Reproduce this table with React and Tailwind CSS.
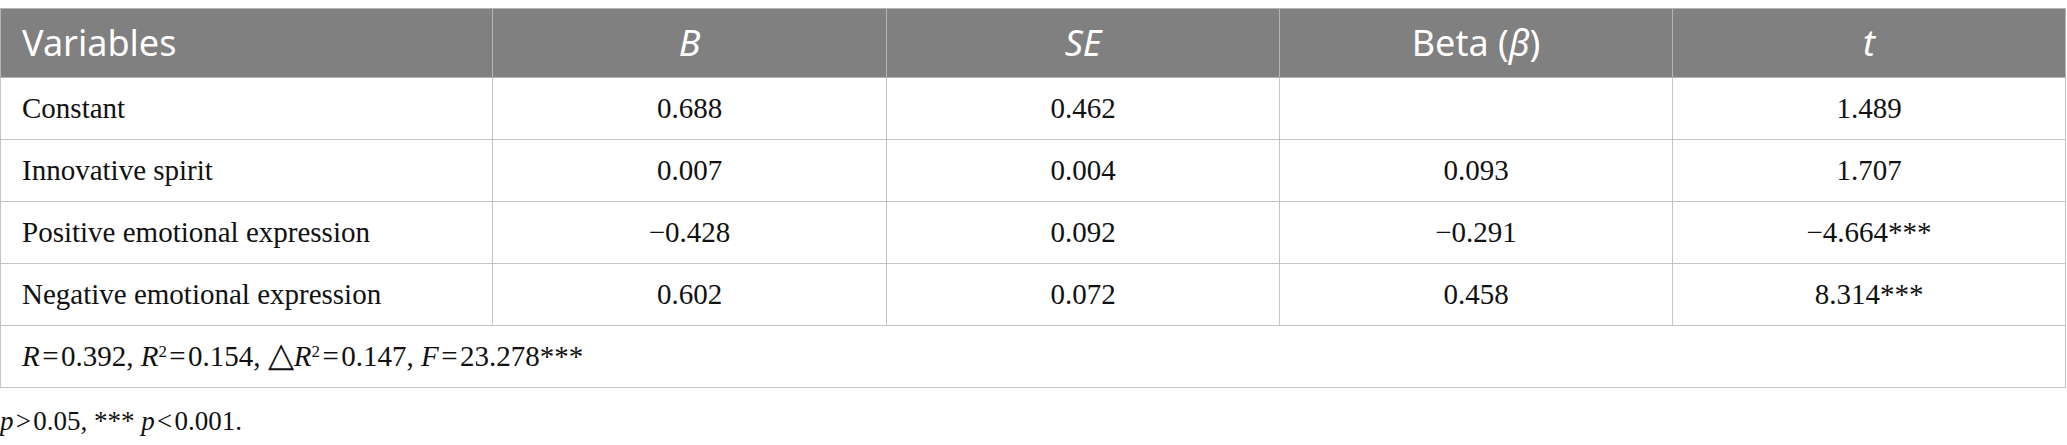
import React from "react";

const rows = [
  { name: "Constant", b: "0.688", se: "0.462", beta: "", t: "1.489" },
  { name: "Innovative spirit", b: "0.007", se: "0.004", beta: "0.093", t: "1.707" },
  { name: "Positive emotional expression", b: "\u22120.428", se: "0.092", beta: "\u22120.291", t: "\u22124.664***" },
  { name: "Negative emotional expression", b: "0.602", se: "0.072", beta: "0.458", t: "8.314***" },
];

const serif = "font-['Liberation_Serif','Times_New_Roman',serif]";
const sans = "font-['Noto_Sans','Open_Sans',sans-serif]";

export default function App() {
  return (
    <div className="w-[2067px] h-[445px] bg-white pt-2 text-[#111]">
      <table className="w-[2066px] table-fixed border-collapse">
        <colgroup>
          <col className="w-[492px]" />
          <col className="w-[394px]" />
          <col className="w-[393px]" />
          <col className="w-[393px]" />
          <col />
        </colgroup>
        <thead>
          <tr className={`h-[69px] bg-[#7f807f] text-white text-[36px] ${sans}`}>
            <th className="border border-[#b4b4b4] pl-[21px] text-left font-normal">Variables</th>
            <th className="border border-[#b4b4b4] text-center font-normal italic">B</th>
            <th className="border border-[#b4b4b4] text-center font-normal italic">SE</th>
            <th className="border border-[#b4b4b4] text-center font-normal">
              Beta (<span className="italic">β</span>)
            </th>
            <th className="border border-[#b4b4b4] text-center font-normal italic">t</th>
          </tr>
        </thead>
        <tbody className={`${serif} text-[29px]`}>
          {rows.map((r) => (
            <tr key={r.name} className="h-[62px]">
              <td className="border border-[#c3c3c3] pl-[21px]">{r.name}</td>
              <td className="border border-[#c3c3c3] text-center">{r.b}</td>
              <td className="border border-[#c3c3c3] text-center">{r.se}</td>
              <td className="border border-[#c3c3c3] text-center">{r.beta}</td>
              <td className="border border-[#c3c3c3] text-center">{r.t}</td>
            </tr>
          ))}
          <tr className="h-[62px]">
            <td colSpan={5} className="border border-[#c3c3c3] pl-[21px]">
              <span className="italic">R</span>{"\u200a=\u200a0.392, "}
              <span className="italic">R</span>
              <sup className="text-[17px]">2</sup>
              {"\u200a=\u200a0.154, "}
              <span className="text-[34px] leading-none">{"\u25b3"}</span>
              <span className="italic">R</span>
              <sup className="text-[17px]">2</sup>
              {"\u200a=\u200a0.147, "}
              <span className="italic">F</span>
              {"\u200a=\u200a23.278***"}
            </td>
          </tr>
        </tbody>
      </table>
      <p className={`${serif} text-[27px] leading-[40px] mt-[13px]`}>
        <span className="italic">p</span>
        {"\u200a>\u200a0.05, *** "}
        <span className="italic">p</span>
        {"\u200a<\u200a0.001."}
      </p>
    </div>
  );
}
